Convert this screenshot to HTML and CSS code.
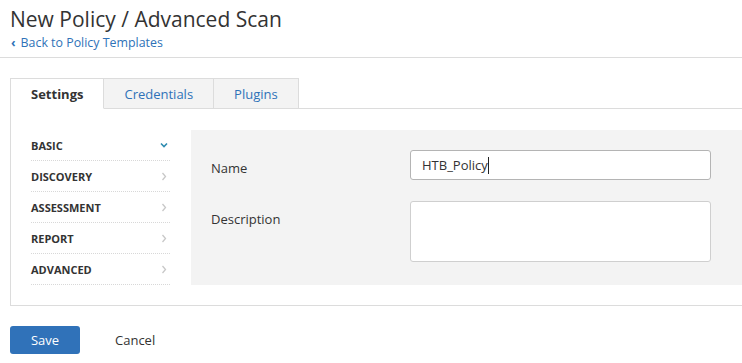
FILE: index.html
```html
<!DOCTYPE html>
<html lang="en">
<head>
  <meta charset="UTF-8">
  <meta name="viewport" content="width=device-width, initial-scale=1">
  <title>New Policy / Advanced Scan</title>
  <link rel="stylesheet" href="styles.css">
</head>
<body>

<div class="page-header">
  <h1>New Policy / Advanced Scan</h1>
  <a class="back-link" href="#"><span class="back-arrow">&#8249;</span>Back to Policy Templates</a>
</div>

<div class="policy-box">
  <div class="tabs">
    <div class="tab active">Settings</div>
    <div class="tab">Credentials</div>
    <div class="tab">Plugins</div>
    <div class="tab-rest"></div>
  </div>

  <div class="policy-body">
    <!-- section menu -->
    <ul class="section-nav">
      <li class="open">BASIC
        <svg class="chev" width="8" height="6" viewBox="0 0 8 6"><path d="M1 1.5 L4 4.5 L7 1.5" fill="none" stroke="#2e8bb0" stroke-width="1.6"/></svg>
      </li>
      <li>DISCOVERY
        <svg class="chev" width="6" height="9" viewBox="0 0 6 9"><path d="M1.5 1 L4.5 4.5 L1.5 8" fill="none" stroke="#c8c8c8" stroke-width="1.3"/></svg>
      </li>
      <li>ASSESSMENT
        <svg class="chev" width="6" height="9" viewBox="0 0 6 9"><path d="M1.5 1 L4.5 4.5 L1.5 8" fill="none" stroke="#c8c8c8" stroke-width="1.3"/></svg>
      </li>
      <li>REPORT
        <svg class="chev" width="6" height="9" viewBox="0 0 6 9"><path d="M1.5 1 L4.5 4.5 L1.5 8" fill="none" stroke="#c8c8c8" stroke-width="1.3"/></svg>
      </li>
      <li>ADVANCED
        <svg class="chev" width="6" height="9" viewBox="0 0 6 9"><path d="M1.5 1 L4.5 4.5 L1.5 8" fill="none" stroke="#c8c8c8" stroke-width="1.3"/></svg>
      </li>
    </ul>

    <div class="form-panel">
      <div class="form-row">
        <label>Name</label>
        <div class="field">HTB_Policy<span class="caret"></span></div>
      </div>
      <div class="form-row">
        <label>Description</label>
        <div class="field textarea"></div>
      </div>
    </div>
  </div>
</div>

<div class="actions">
  <button class="btn-save">Save</button>
  <a class="btn-cancel" href="#">Cancel</a>
</div>

</body>
</html>
```

FILE: styles.css
```css
body {
  margin: 0;
  font-family: "Open Sans", Arial, sans-serif;
  color: #333;
  background: white;
  overflow: hidden;
}
.page-header {
  padding: 4px 10px 0;
  height: 53px;
  border-bottom: 1px solid #dcdcdc;
}
h1 {
  margin: 0;
  font-size: 21px;
  font-weight: 400;
  line-height: 30px;
  color: #333;
}
.back-link {
  display: block;
  font-size: 12.4px;
  line-height: 18px;
  color: #2f72b8;
  text-decoration: none;
}
.back-arrow {
  font-weight: bold;
  margin-right: 5px;
  margin-left: 1px;
}
.policy-box {
  margin: 20px 0 0 10px;
  width: 760px;
  border-left: 1px solid #dcdcdc;
  border-bottom: 1px solid #dcdcdc;
}
.tabs {
  display: flex;
  height: 31px;
}
.tab {
  padding: 0 20px;
  font-size: 13px;
  line-height: 30px;
  color: #2f72b8;
  background: #f3f3f3;
  border-top: 1px solid #dcdcdc;
  border-right: 1px solid #dcdcdc;
  border-bottom: 1px solid #dcdcdc;
}
.tab.active {
  color: #333;
  font-weight: bold;
  background: white;
  border-bottom-color: white;
}
.tab-rest {
  flex: 1;
  border-bottom: 1px solid #dcdcdc;
}
.policy-body {
  display: flex;
  padding: 21px 0 20px 20px;
}
.section-nav {
  list-style: none;
  margin: 0 21px 0 0;
  padding: 0;
  width: 139px;
}
.section-nav li {
  display: flex;
  justify-content: space-between;
  align-items: center;
  height: 30px;
  padding-right: 3px;
  font-size: 11px;
  font-weight: bold;
  border-bottom: 1px dotted #d8d8d8;
}
.section-nav li.open .chev {
  margin-right: -1px;
}
.form-panel {
  flex: 1;
  background: #f3f3f3;
  padding: 20px 20px 21px;
}
.form-row {
  display: flex;
  margin-bottom: 21px;
}
.form-row:last-child {
  margin-bottom: 0;
}
.form-row label {
  width: 199px;
  font-size: 13px;
  line-height: 18px;
  padding-top: 9px;
}
.field {
  box-sizing: border-box;
  width: 301px;
  height: 30px;
  padding: 0 11px;
  background: white;
  border: 1px solid #b4b4b4;
  border-radius: 3px;
  font-size: 13px;
  line-height: 28px;
  color: #333;
}
.field.textarea {
  height: 61px;
  border-color: #cfcfcf;
}
.caret {
  display: inline-block;
  width: 1px;
  height: 17px;
  background: #222;
  vertical-align: -4px;
}
.actions {
  display: flex;
  align-items: center;
  padding: 20px 10px;
}
.btn-save {
  width: 70px;
  height: 28px;
  border: none;
  border-radius: 3px;
  background: #3072b9;
  color: white;
  font-family: inherit;
  font-size: 13px;
}
.btn-cancel {
  margin-left: 35px;
  font-size: 13px;
  color: #333;
  text-decoration: none;
}
```
